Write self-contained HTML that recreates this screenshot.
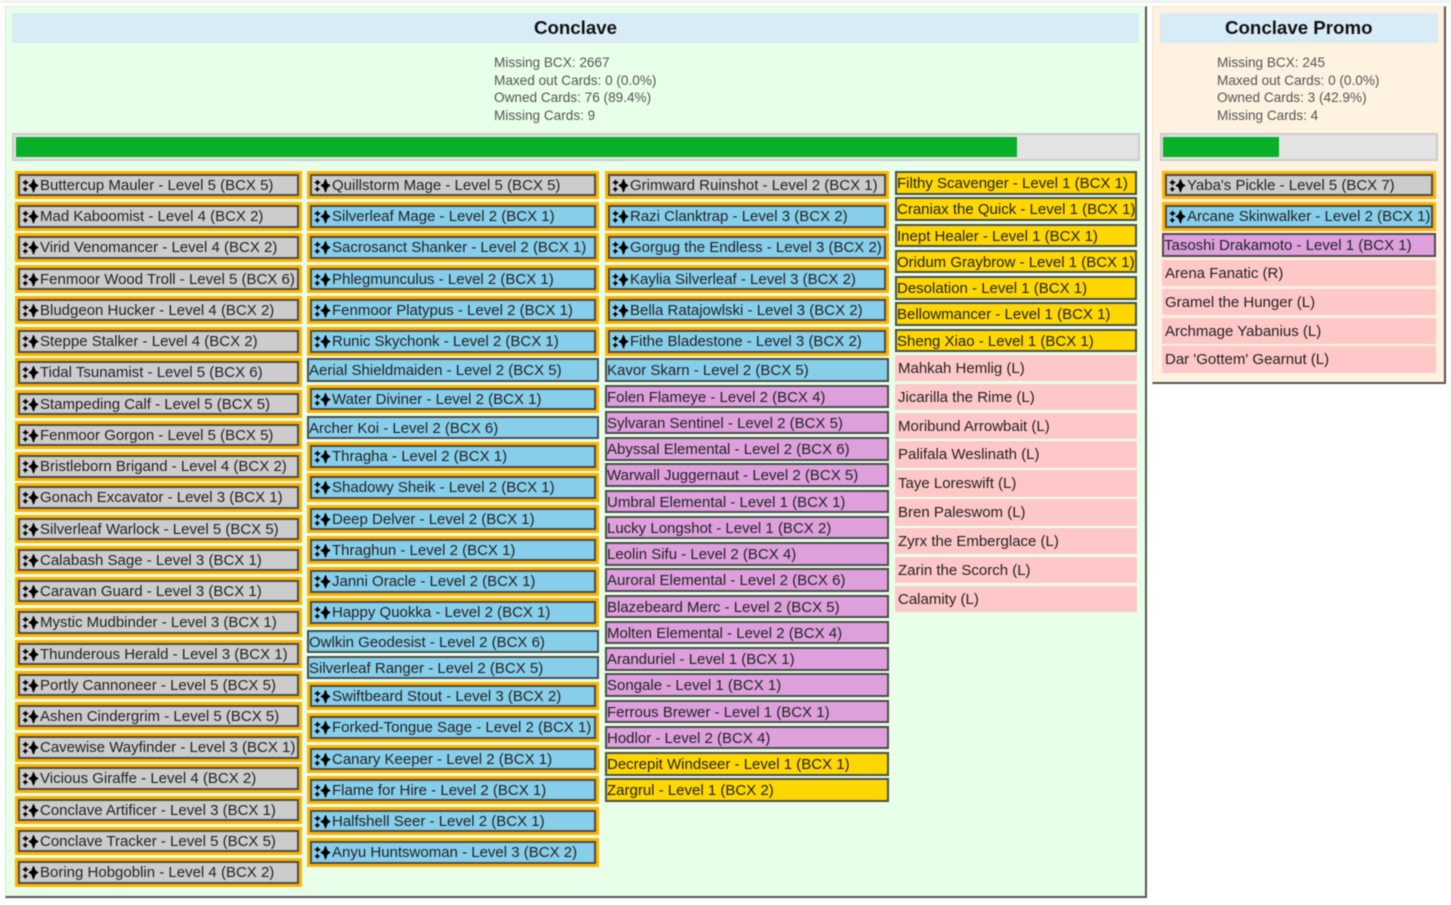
<!DOCTYPE html>
<html><head><meta charset="utf-8"><style>
html,body{margin:0;padding:0;width:1451px;height:905px;overflow:hidden;background:#fff}
#w{position:relative;width:1451px;height:905px;filter:blur(.4px);font-family:"Liberation Sans",Arial,sans-serif;font-size:15px;color:#222}
.abs{position:absolute;box-sizing:border-box}
.panel{border-style:solid;border-width:1.5px 2px 2px 1.5px}
.h{background:#d8ecf8;color:#111;font-weight:bold;font-size:18.7px;text-align:center;line-height:30px;height:30px}
.st{color:#555;font-size:13.6px;line-height:17.6px;white-space:nowrap}
.bar{background:#e3e3e3;border:2.5px solid #ccc}
.fill{background:#07b027;height:100%}
.col{position:absolute;top:171px}
.c{box-sizing:border-box;white-space:nowrap;overflow:visible}
.o{height:28.45px;margin-bottom:2.8px;border:3px solid #ffb400;position:relative}
.o>div{height:22.45px;border:2px solid #4c4c4c;box-sizing:border-box;line-height:20px;padding-left:20px}
.o svg{position:absolute;left:4px;top:5px}
.p{height:23.5px;margin-bottom:2.75px;border:2px solid #4c4c4c;line-height:21px;padding-left:0}
.m{height:26.4px;margin-bottom:2.5px;background:#ffc8c8;line-height:27px;padding-left:3px}
.g>div{background:#ccc}.b>div,.b.p{background:#87ceeb}
.v{background:#dda0dd}.y{background:#ffd700}
</style></head><body><div id="w">
<svg width="0" height="0" style="position:absolute"><defs><g id="s"><path fill="#000" stroke="#000" stroke-width="1" stroke-linejoin="round" d="M11.500 0.500L13.200 4.800L16 6.500L13.200 8.200L11.500 13L9.800 8.200L7 6.500L9.800 4.800Z"/><path fill="#000" stroke="#000" stroke-width="1" stroke-linejoin="round" d="M3.500 1.200L4.300 2.800L6 3.500L4.300 4.200L3.500 5.800L2.700 4.200L1 3.500L2.700 2.800Z"/><path fill="#000" stroke="#000" stroke-width="1" stroke-linejoin="round" d="M3.300 8.200L4 9.600L5.400 10.200L4 10.800L3.300 12.300L2.600 10.800L1.200 10.200L2.600 9.600Z"/></g></defs></svg>

<div class="abs" style="left:0;top:0;width:1451px;height:3px;background:#f2f2f2"></div>
<div class="abs" style="left:1450px;top:0;width:1px;height:783px;background:#e8ffe8"></div>

<div class="abs panel" style="left:4.500px;top:6px;width:1142.500px;height:892px;background:#e8ffe8;border-color:#d4ecd4 #555 #555 #d4ecd4"></div>
<div class="abs h" style="left:12px;top:13px;width:1127px">Conclave</div>
<div class="abs st" style="left:494px;top:54px">Missing BCX: 2667<br>Maxed out Cards: 0 (0.0%)<br>Owned Cards: 76 (89.4%)<br>Missing Cards: 9</div>
<div class="abs bar" style="left:12px;top:133px;width:1127.500px;height:28px"><div class="fill" style="width:1001.500px;margin-left:1.500px;height:20px;margin-top:1.500px"></div></div>

<div class="abs panel" style="left:1151.500px;top:6px;width:294px;height:378px;background:#fff2e0;border-color:#f0e4d2 #555 #555 #f0e4d2"></div>
<div class="abs h" style="left:1159.500px;top:13px;width:278.500px">Conclave Promo</div>
<div class="abs st" style="left:1217px;top:54px">Missing BCX: 245<br>Maxed out Cards: 0 (0.0%)<br>Owned Cards: 3 (42.9%)<br>Missing Cards: 4</div>
<div class="abs bar" style="left:1159.500px;top:133px;width:278.500px;height:28px"><div class="fill" style="width:116px;margin-left:1px;height:20px;margin-top:1.500px"></div></div>

<div class="col" style="left:15px;width:287px">
<div class="c o g"><div><svg width="17" height="14"><use href="#s"/></svg>Buttercup Mauler - Level 5 (BCX 5)</div></div>
<div class="c o g"><div><svg width="17" height="14"><use href="#s"/></svg>Mad Kaboomist - Level 4 (BCX 2)</div></div>
<div class="c o g"><div><svg width="17" height="14"><use href="#s"/></svg>Virid Venomancer - Level 4 (BCX 2)</div></div>
<div class="c o g"><div><svg width="17" height="14"><use href="#s"/></svg>Fenmoor Wood Troll - Level 5 (BCX 6)</div></div>
<div class="c o g"><div><svg width="17" height="14"><use href="#s"/></svg>Bludgeon Hucker - Level 4 (BCX 2)</div></div>
<div class="c o g"><div><svg width="17" height="14"><use href="#s"/></svg>Steppe Stalker - Level 4 (BCX 2)</div></div>
<div class="c o g"><div><svg width="17" height="14"><use href="#s"/></svg>Tidal Tsunamist - Level 5 (BCX 6)</div></div>
<div class="c o g"><div><svg width="17" height="14"><use href="#s"/></svg>Stampeding Calf - Level 5 (BCX 5)</div></div>
<div class="c o g"><div><svg width="17" height="14"><use href="#s"/></svg>Fenmoor Gorgon - Level 5 (BCX 5)</div></div>
<div class="c o g"><div><svg width="17" height="14"><use href="#s"/></svg>Bristleborn Brigand - Level 4 (BCX 2)</div></div>
<div class="c o g"><div><svg width="17" height="14"><use href="#s"/></svg>Gonach Excavator - Level 3 (BCX 1)</div></div>
<div class="c o g"><div><svg width="17" height="14"><use href="#s"/></svg>Silverleaf Warlock - Level 5 (BCX 5)</div></div>
<div class="c o g"><div><svg width="17" height="14"><use href="#s"/></svg>Calabash Sage - Level 3 (BCX 1)</div></div>
<div class="c o g"><div><svg width="17" height="14"><use href="#s"/></svg>Caravan Guard - Level 3 (BCX 1)</div></div>
<div class="c o g"><div><svg width="17" height="14"><use href="#s"/></svg>Mystic Mudbinder - Level 3 (BCX 1)</div></div>
<div class="c o g"><div><svg width="17" height="14"><use href="#s"/></svg>Thunderous Herald - Level 3 (BCX 1)</div></div>
<div class="c o g"><div><svg width="17" height="14"><use href="#s"/></svg>Portly Cannoneer - Level 5 (BCX 5)</div></div>
<div class="c o g"><div><svg width="17" height="14"><use href="#s"/></svg>Ashen Cindergrim - Level 5 (BCX 5)</div></div>
<div class="c o g"><div><svg width="17" height="14"><use href="#s"/></svg>Cavewise Wayfinder - Level 3 (BCX 1)</div></div>
<div class="c o g"><div><svg width="17" height="14"><use href="#s"/></svg>Vicious Giraffe - Level 4 (BCX 2)</div></div>
<div class="c o g"><div><svg width="17" height="14"><use href="#s"/></svg>Conclave Artificer - Level 3 (BCX 1)</div></div>
<div class="c o g"><div><svg width="17" height="14"><use href="#s"/></svg>Conclave Tracker - Level 5 (BCX 5)</div></div>
<div class="c o g"><div><svg width="17" height="14"><use href="#s"/></svg>Boring Hobgoblin - Level 4 (BCX 2)</div></div>
</div>

<div class="col" style="left:307px;width:292px">
<div class="c o g"><div><svg width="17" height="14"><use href="#s"/></svg>Quillstorm Mage - Level 5 (BCX 5)</div></div>
<div class="c o b"><div><svg width="17" height="14"><use href="#s"/></svg>Silverleaf Mage - Level 2 (BCX 1)</div></div>
<div class="c o b"><div><svg width="17" height="14"><use href="#s"/></svg>Sacrosanct Shanker - Level 2 (BCX 1)</div></div>
<div class="c o b"><div><svg width="17" height="14"><use href="#s"/></svg>Phlegmunculus - Level 2 (BCX 1)</div></div>
<div class="c o b"><div><svg width="17" height="14"><use href="#s"/></svg>Fenmoor Platypus - Level 2 (BCX 1)</div></div>
<div class="c o b"><div><svg width="17" height="14"><use href="#s"/></svg>Runic Skychonk - Level 2 (BCX 1)</div></div>
<div class="c p b">Aerial Shieldmaiden - Level 2 (BCX 5)</div>
<div class="c o b"><div><svg width="17" height="14"><use href="#s"/></svg>Water Diviner - Level 2 (BCX 1)</div></div>
<div class="c p b">Archer Koi - Level 2 (BCX 6)</div>
<div class="c o b"><div><svg width="17" height="14"><use href="#s"/></svg>Thragha - Level 2 (BCX 1)</div></div>
<div class="c o b"><div><svg width="17" height="14"><use href="#s"/></svg>Shadowy Sheik - Level 2 (BCX 1)</div></div>
<div class="c o b"><div><svg width="17" height="14"><use href="#s"/></svg>Deep Delver - Level 2 (BCX 1)</div></div>
<div class="c o b"><div><svg width="17" height="14"><use href="#s"/></svg>Thraghun - Level 2 (BCX 1)</div></div>
<div class="c o b"><div><svg width="17" height="14"><use href="#s"/></svg>Janni Oracle - Level 2 (BCX 1)</div></div>
<div class="c o b"><div><svg width="17" height="14"><use href="#s"/></svg>Happy Quokka - Level 2 (BCX 1)</div></div>
<div class="c p b">Owlkin Geodesist - Level 2 (BCX 6)</div>
<div class="c p b">Silverleaf Ranger - Level 2 (BCX 5)</div>
<div class="c o b"><div><svg width="17" height="14"><use href="#s"/></svg>Swiftbeard Stout - Level 3 (BCX 2)</div></div>
<div class="c o b"><div><svg width="17" height="14"><use href="#s"/></svg>Forked-Tongue Sage - Level 2 (BCX 1)</div></div>
<div class="c o b"><div><svg width="17" height="14"><use href="#s"/></svg>Canary Keeper - Level 2 (BCX 1)</div></div>
<div class="c o b"><div><svg width="17" height="14"><use href="#s"/></svg>Flame for Hire - Level 2 (BCX 1)</div></div>
<div class="c o b"><div><svg width="17" height="14"><use href="#s"/></svg>Halfshell Seer - Level 2 (BCX 1)</div></div>
<div class="c o b"><div><svg width="17" height="14"><use href="#s"/></svg>Anyu Huntswoman - Level 3 (BCX 2)</div></div>
</div>

<div class="col" style="left:605px;width:284px">
<div class="c o g"><div><svg width="17" height="14"><use href="#s"/></svg>Grimward Ruinshot - Level 2 (BCX 1)</div></div>
<div class="c o b"><div><svg width="17" height="14"><use href="#s"/></svg>Razi Clanktrap - Level 3 (BCX 2)</div></div>
<div class="c o b"><div><svg width="17" height="14"><use href="#s"/></svg>Gorgug the Endless - Level 3 (BCX 2)</div></div>
<div class="c o b"><div><svg width="17" height="14"><use href="#s"/></svg>Kaylia Silverleaf - Level 3 (BCX 2)</div></div>
<div class="c o b"><div><svg width="17" height="14"><use href="#s"/></svg>Bella Ratajowlski - Level 3 (BCX 2)</div></div>
<div class="c o b"><div><svg width="17" height="14"><use href="#s"/></svg>Fithe Bladestone - Level 3 (BCX 2)</div></div>
<div class="c p b">Kavor Skarn - Level 2 (BCX 5)</div>
<div class="c p v">Folen Flameye - Level 2 (BCX 4)</div>
<div class="c p v">Sylvaran Sentinel - Level 2 (BCX 5)</div>
<div class="c p v">Abyssal Elemental - Level 2 (BCX 6)</div>
<div class="c p v">Warwall Juggernaut - Level 2 (BCX 5)</div>
<div class="c p v">Umbral Elemental - Level 1 (BCX 1)</div>
<div class="c p v">Lucky Longshot - Level 1 (BCX 2)</div>
<div class="c p v">Leolin Sifu - Level 2 (BCX 4)</div>
<div class="c p v">Auroral Elemental - Level 2 (BCX 6)</div>
<div class="c p v">Blazebeard Merc - Level 2 (BCX 5)</div>
<div class="c p v">Molten Elemental - Level 2 (BCX 4)</div>
<div class="c p v">Aranduriel - Level 1 (BCX 1)</div>
<div class="c p v">Songale - Level 1 (BCX 1)</div>
<div class="c p v">Ferrous Brewer - Level 1 (BCX 1)</div>
<div class="c p v">Hodlor - Level 2 (BCX 4)</div>
<div class="c p y">Decrepit Windseer - Level 1 (BCX 1)</div>
<div class="c p y">Zargrul - Level 1 (BCX 2)</div>
</div>

<div class="col" style="left:895px;width:242px">
<div class="c p y">Filthy Scavenger - Level 1 (BCX 1)</div>
<div class="c p y">Craniax the Quick - Level 1 (BCX 1)</div>
<div class="c p y">Inept Healer - Level 1 (BCX 1)</div>
<div class="c p y">Oridum Graybrow - Level 1 (BCX 1)</div>
<div class="c p y">Desolation - Level 1 (BCX 1)</div>
<div class="c p y">Bellowmancer - Level 1 (BCX 1)</div>
<div class="c p y">Sheng Xiao - Level 1 (BCX 1)</div>
<div class="c m" style="margin-top:2px">Mahkah Hemlig (L)</div>
<div class="c m">Jicarilla the Rime (L)</div>
<div class="c m">Moribund Arrowbait (L)</div>
<div class="c m">Palifala Weslinath (L)</div>
<div class="c m">Taye Loreswift (L)</div>
<div class="c m">Bren Paleswom (L)</div>
<div class="c m">Zyrx the Emberglace (L)</div>
<div class="c m">Zarin the Scorch (L)</div>
<div class="c m">Calamity (L)</div>
</div>

<div class="col" style="left:1162px;width:274px">
<div class="c o g"><div><svg width="17" height="14"><use href="#s"/></svg>Yaba's Pickle - Level 5 (BCX 7)</div></div>
<div class="c o b"><div><svg width="17" height="14"><use href="#s"/></svg>Arcane Skinwalker - Level 2 (BCX 1)</div></div>
<div class="c p v">Tasoshi Drakamoto - Level 1 (BCX 1)</div>
<div class="c m" style="margin-top:2px">Arena Fanatic (R)</div>
<div class="c m">Gramel the Hunger (L)</div>
<div class="c m">Archmage Yabanius (L)</div>
<div class="c m">Dar 'Gottem' Gearnut (L)</div>
</div>
</div></body></html>
